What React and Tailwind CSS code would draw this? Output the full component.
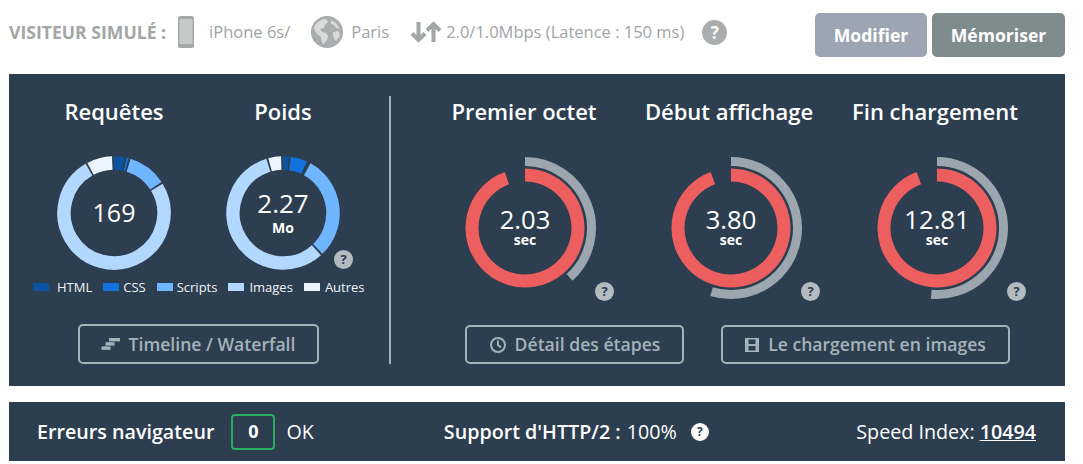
function Arc({ r, w, from, to, color }) {
  const p = (a) => {
    const t = ((a - 90) * Math.PI) / 180;
    return [r * Math.cos(t), r * Math.sin(t)];
  };
  const [x1, y1] = p(from);
  const [x2, y2] = p(to);
  const large = to - from > 180 ? 1 : 0;
  return <path d={`M${x1} ${y1}A${r} ${r} 0 ${large} 1 ${x2} ${y2}`} fill="none" stroke={color} strokeWidth={w} />;
}

function Help() {
  return (
    <span className="flex h-[19px] w-[19px] items-center justify-center rounded-full bg-[#b3bac0] text-[13px] font-bold leading-none text-[#2c3e50]">?</span>
  );
}

function Donut({ segs, children }) {
  return (
    <div className="relative h-[114px] w-[114px]">
      <svg viewBox="-57 -57 114 114" className="h-[114px] w-[114px]">
        {segs.map((s, i) => (
          <Arc key={i} r={50} w={13.5} from={s[0]} to={s[1]} color={s[2]} />
        ))}
      </svg>
      <div className="absolute inset-0 flex flex-col items-center justify-center text-white">{children}</div>
    </div>
  );
}

function Gauge({ gray, red = 340, value }) {
  return (
    <div className="relative h-[144px] w-[144px]">
      <svg viewBox="-72 -72 144 144" className="h-[144px] w-[144px]">
        <Arc r={66.5} w={9} from={0} to={gray} color="#9ca6af" />
        <Arc r={53} w={13} from={0} to={red} color="#ed5e5e" />
      </svg>
      <div className="absolute inset-0 flex flex-col items-center justify-center pb-[4px] text-white">
        <span className="text-[25.6px] leading-[27px]">{value}</span>
        <span className="text-[14px] font-bold leading-[14px]">sec</span>
      </div>
    </div>
  );
}

function Legend({ color, label, gap }) {
  return (
    <span className={`flex items-center ${gap}`}>
      <span className="h-[8px] w-[16px]" style={{ background: color }} />
      {label}
    </span>
  );
}

function OutlineButton({ icon, label, className }) {
  return (
    <div className={`flex h-[39px] items-center justify-center rounded-[5px] border-2 border-[#a5b2b8] text-[17.6px] font-semibold text-[#a5b2b8] ${className}`}>
      {icon}
      <span>{label}</span>
    </div>
  );
}

function Title({ children, className }) {
  return <div className={`text-center text-[22px] font-semibold leading-[28px] whitespace-nowrap text-white ${className}`}>{children}</div>;
}

export default function App() {
  return (
    <div className="h-[464px] w-[1083px] overflow-hidden bg-white font-['Open_Sans',sans-serif]">
      {/* top line */}
      <div className="flex h-[74px] pl-[9px] pr-[18px]">
        <div className="flex h-[64px] flex-1 items-center text-[16.5px] text-[#a0a4a6]">
          <span className="text-[17.6px] font-bold text-[#a3a5a6]">VISITEUR SIMULÉ :</span>
          <svg viewBox="0 0 16 32" className="ml-[12px] h-[32px] w-[16px]">
            <rect width="16" height="32" rx="2.5" fill="#a3a8a8" />
            <rect x="1.5" y="3" width="13" height="25" fill="#c6c9c8" />
          </svg>
          <span className="ml-[15px]">iPhone 6s/</span>
          <svg viewBox="0 0 32 32" className="ml-[21px] h-[32px] w-[32px]">
            <circle cx="16" cy="16" r="16" fill="#a9adae" />
            <path d="M4 9c3-4 7-6 11-6l2 3-3 3-1 3-4 1 2 3 4 1 2 3-1 4-3 4-2-1-1-6-4-3-3-6zM20 4l5 3 4 6-4-1-2-3-3-1zM22 16l6-1 1 5-4 5-2-2-1-4z" fill="#d9dbdb" />
          </svg>
          <span className="ml-[8px]">Paris</span>
          <svg viewBox="0 0 32 24" className="ml-[21px] h-[24px] w-[32px]" fill="none" stroke="#a3a7a8" strokeWidth="4">
            <path d="M8.5 2v18M2 13.5l6.5 6.5 6.5-6.5M23.5 22V4M17 10.5L23.5 4 30 10.5" />
          </svg>
          <span className="ml-[4px]">2.0/1.0Mbps (Latence : 150 ms)</span>
          <span className="ml-[18px] flex h-[25px] w-[25px] items-center justify-center rounded-full bg-[#a9adae] text-[17px] font-bold leading-none text-white">?</span>
        </div>
        <div className="mt-[13px] flex h-[44px] gap-[5px] text-[17.6px] font-bold text-white">
          <div className="flex w-[112px] items-center justify-center rounded-[5px] bg-[#9ba6b2]">Modifier</div>
          <div className="flex w-[133px] items-center justify-center rounded-[5px] bg-[#7f8c8d]">Mémoriser</div>
        </div>
      </div>

      {/* main panel */}
      <div className="ml-[9px] flex h-[312px] w-[1056px] bg-[#2c3e50]">
        <div className="flex w-[380px] flex-col items-center pt-[23px]">
          <div className="flex w-full pl-[49px]">
            <Title className="w-[112px]">Requêtes</Title>
            <Title className="ml-[57px] w-[112px]">Poids</Title>
          </div>
          <div className="mt-[31px] flex w-full pl-[48px]">
            <Donut segs={[[0,11,"#0d54a0"],[13,15,"#1273de"],[17,57,"#6fb5ff"],[59,330,"#b3d8ff"],[332,358,"#ecf5ff"]]}>
              <span className="pb-[2px] text-[25px] leading-[30px]">169</span>
            </Donut>
            <div className="relative ml-[55px]">
              <Donut segs={[[0,6,"#0d54a0"],[8,25,"#1273de"],[29,136,"#6fb5ff"],[138,343,"#b3d8ff"],[345,358,"#ecf5ff"]]}>
                <span className="mt-[-1px] text-[26px] leading-[30px]">2.27</span>
                <span className="text-[14px] font-bold leading-[20px]">Mo</span>
              </Donut>
              <span className="absolute left-[108px] top-[94px]"><Help /></span>
            </div>
          </div>
          <div className="mt-[9px] flex w-full gap-[11px] pl-[24px] text-[13px] leading-[16px] text-[#f0f4f8]">
            <Legend gap="gap-[8px]" color="#0d54a0" label="HTML" />
            <Legend gap="gap-[4px]" color="#1273de" label="CSS" />
            <Legend gap="gap-[4px]" color="#6fb5ff" label="Scripts" />
            <Legend gap="gap-[5px]" color="#b3d8ff" label="Images" />
            <Legend gap="gap-[5px]" color="#ecf5ff" label="Autres" />
          </div>
          <OutlineButton
            className="mr-[2px] mt-[29px] h-[40px] w-[241px] gap-[8px]"
            label="Timeline / Waterfall"
            icon={
              <svg viewBox="0 0 20 14" className="h-[14px] w-[20px]" fill="#a5b2b8">
                <rect x="8" y="1" width="11" height="3.4" />
                <rect x="4.5" y="5.2" width="9" height="3.4" />
                <rect x="0.5" y="9.4" width="9" height="3.4" />
              </svg>
            }
          />
        </div>

        <div className="mt-[22px] h-[268px] w-[2px] bg-[#a5b2b8]" />

        <div className="flex flex-1 flex-col pt-[23px]">
          <div className="flex">
            <Title className="ml-[38px] w-[190px]">Premier octet</Title>
            <Title className="ml-[12px] w-[196px]">Début affichage</Title>
            <Title className="ml-[13px] w-[190px]">Fin chargement</Title>
          </div>
          <div className="mt-[31px] flex">
            <div className="relative ml-[62px]">
              <Gauge gray={138} value="2.03" />
              <span className="absolute left-[142px] top-[126px]"><Help /></span>
            </div>
            <div className="relative ml-[62px]">
              <Gauge gray={197} value="3.80" />
              <span className="absolute left-[142px] top-[126px]"><Help /></span>
            </div>
            <div className="relative ml-[62px]">
              <Gauge gray={185} value="12.81" />
              <span className="absolute left-[142px] top-[126px]"><Help /></span>
            </div>
          </div>
          <div className="mt-[25px] flex">
            <OutlineButton
              className="ml-[74px] w-[219px] gap-[8px]"
              label="Détail des étapes"
              icon={
                <svg viewBox="0 0 18 18" className="h-[18px] w-[18px]" fill="none" stroke="#a5b2b8" strokeWidth="2">
                  <circle cx="9" cy="9" r="7" />
                  <path d="M9 4.5V9l3 2.5" />
                </svg>
              }
            />
            <OutlineButton
              className="ml-[37px] w-[289px] gap-[9px]"
              label="Le chargement en images"
              icon={
                <svg viewBox="0 0 14 14" className="h-[14px] w-[14px]" fill="#a5b2b8">
                  <path fillRule="evenodd" d="M0 0h14v14H0zM3.5 1.5v4.5h7V1.5zM3.5 8v4.5h7V8z" />
                </svg>
              }
            />
          </div>
        </div>
      </div>

      {/* bottom bar */}
      <div className="ml-[9px] mt-[16px] flex h-[59px] w-[1056px] items-center bg-[#2c3e50] text-[19.7px] text-white">
        <span className="ml-[28px] font-semibold">Erreurs navigateur</span>
        <span className="ml-[17px] flex h-[36px] w-[44px] items-center justify-center rounded-[4px] border-2 border-[#27ae60] text-[18px] font-bold">0</span>
        <span className="ml-[11px]">OK</span>
        <span className="ml-[130px] font-semibold">Support d'HTTP/2 :</span>
        <span className="ml-[6px]">100%</span>
        <span className="ml-[14px] flex h-[18px] w-[18px] items-center justify-center rounded-full bg-white text-[12px] font-bold leading-none text-[#2c3e50]">?</span>
        <span className="ml-auto mr-[29px]">Speed Index: <span className="font-semibold underline">10494</span></span>
      </div>
    </div>
  );
}
